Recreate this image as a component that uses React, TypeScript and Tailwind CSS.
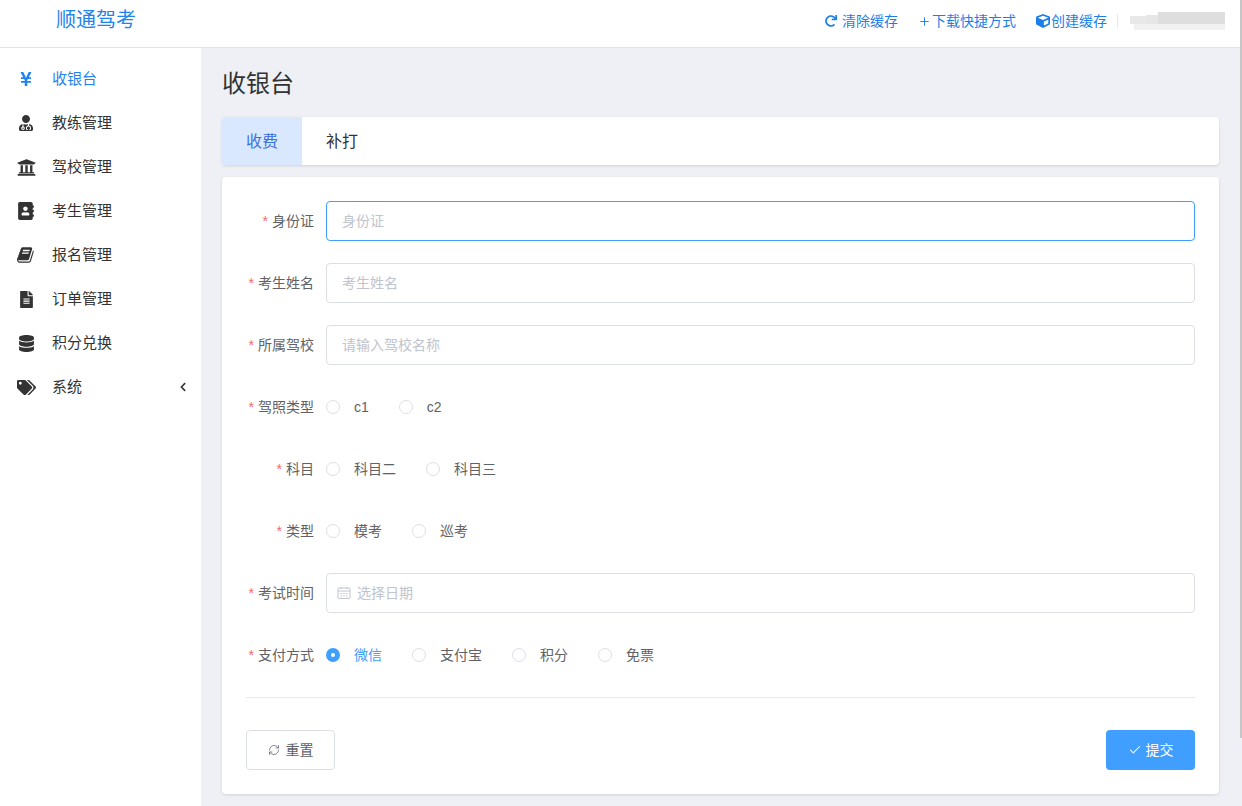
import React from 'react';
import { FaYenSign, FaUserMd, FaUniversity, FaAddressBook, FaFileAlt, FaDatabase, FaTags, FaRedo, FaCube, FaChevronLeft } from 'react-icons/fa';
import { Plus, RefreshCw, Check } from 'lucide-react';

const BookIcon = ({ size = 16, className }: { size?: number; className?: string }) => (
  <svg width={size} height={size} viewBox="0 0 1792 1792" fill="currentColor" className={className}>
    <path d="M1639 478q40 57 18 129l-275 906q-19 64-76.5 107.5t-122.5 43.5h-923q-77 0-148.5-53.5t-99.5-131.5q-24-67-2-127 0-4 3-27t4-37q1-8-3-21.5t-3-19.5q2-11 8-21t16.5-23.5 16.5-23.5q23-38 45-91.5t30-91.5q3-10 .5-30t-.5-28q3-11 17-28t17-23q21-36 42-92t25-90q1-9-2.5-32t.5-28q4-13 22-30.5t22-22.5q19-26 42.5-84.5t27.5-96.5q1-8-3-25.5t-2-26.5q2-8 9-18t18-23 17-21q8-12 16.5-30.5t15-35 16-36 19.5-32 26.5-23.5 36-11.5 47.5 5.5l-1 3q38-9 51-9h761q74 0 114 56t18 130l-274 906q-36 119-71.5 153.5t-128.5 34.5h-869q-27 0-38 15-11 16-1 43 24 70 144 70h923q29 0 56-15.5t35-41.5l300-987q7-22 5-57 38 15 59 43zm-1064 2q-4 13 2 22.5t20 9.5h608q13 0 25.5-9.5t16.5-22.5l21-64q4-13-2-22.5t-20-9.5h-608q-13 0-25.5 9.5t-16.5 22.5zm-83 256q-4 13 2 22.5t20 9.5h608q13 0 25.5-9.5t16.5-22.5l21-64q4-13-2-22.5t-20-9.5h-608q-13 0-25.5 9.5t-16.5 22.5z" />
  </svg>
);

const DateIcon = () => (
  <svg width="14" height="14" viewBox="0 0 14 14" fill="none" stroke="currentColor" className="mr-[6px] shrink-0">
    <rect x="1" y="2" width="12" height="10.5" rx="1" />
    <path d="M1 5h12M4 1v2M10 1v2" />
    <path d="M3.5 7.5h7M3.5 10h7" strokeDasharray="1.5 1.25" />
  </svg>
);

const menu = [
  { label: '收银台', icon: FaYenSign, size: 16, active: true },
  { label: '教练管理', icon: FaUserMd, size: 16 },
  { label: '驾校管理', icon: FaUniversity, size: 19 },
  { label: '考生管理', icon: FaAddressBook, size: 18 },
  { label: '报名管理', icon: BookIcon, size: 18 },
  { label: '订单管理', icon: FaFileAlt, size: 17 },
  { label: '积分兑换', icon: FaDatabase, size: 17 },
  { label: '系统', icon: FaTags, size: 19, arrow: true },
];

const Label = ({ text }: { text: string }) => (
  <label className="w-[68px] shrink-0 text-right text-[14px] text-[#606266] whitespace-nowrap">
    <span className="text-[#f56c6c] mr-1">*</span>
    {text}
  </label>
);

const Row = ({ label, children }: { label: string; children: React.ReactNode }) => (
  <div className="flex items-center h-10 gap-3">
    <Label text={label} />
    <div className="flex-1 flex items-center">{children}</div>
  </div>
);

const TextInput = ({ placeholder, focused }: { placeholder: string; focused?: boolean }) => (
  <input
    readOnly
    placeholder={placeholder}
    className={`w-full h-10 px-[15px] rounded border bg-white text-[14px] outline-none placeholder:text-[#c0c4cc] ${
      focused ? 'border-[#409eff]' : 'border-[#dcdfe6]'
    }`}
  />
);

const Radio = ({ label, checked }: { label: string; checked?: boolean }) => (
  <div className="flex items-center mr-[30px]">
    {checked ? (
      <span className="w-[14px] h-[14px] rounded-full bg-[#409eff] flex items-center justify-center">
        <span className="w-1 h-1 rounded-full bg-white" />
      </span>
    ) : (
      <span className="w-[14px] h-[14px] rounded-full border border-[#dcdfe6] bg-white" />
    )}
    <span className={`ml-[14px] text-[14px] ${checked ? 'text-[#409eff]' : 'text-[#606266]'}`}>{label}</span>
  </div>
);

export default function App() {
  return (
    <div className="relative h-[806px] overflow-hidden bg-[#eef0f5] font-['Liberation_Sans','Noto_Sans_CJK_SC',sans-serif]">
      {/* Header */}
      <header className="h-12 bg-white border-b border-[#e3e5ea] flex items-center pr-[17px]">
        <div className="pl-[56px] text-[20px] text-[#1f84ee] -mt-[7px]">顺通驾考</div>
        <div className="ml-auto flex items-center text-[14px] text-[#1a7fe8] -mt-[5px]">
          <span className="flex items-center mr-5">
            <FaRedo size={12} className="mr-[5px]" />
            清除缓存
          </span>
          <span className="flex items-center mr-5">
            <Plus size={13} strokeWidth={1.75} className="mr-[1px]" />
            下载快捷方式
          </span>
          <span className="flex items-center">
            <FaCube size={14} className="mr-[1px]" />
            创建缓存
          </span>
          <span className="ml-[10px] h-[14px] w-px bg-[#e8e8e8]" />
          {/* username is blurred out in the screenshot */}
          <div className="ml-[12px] w-[95px] flex flex-col blur-[0.5px]">
            <div className="h-3 flex items-end">
              <span className="h-2 w-4 bg-[#e8e8e8]" />
              <span className="h-[9px] w-3 bg-[#e6e6e6]" />
              <span className="h-3 flex-1 bg-[#dedede]" />
            </div>
            <div className="h-[6px] ml-1 bg-[#f1f1f1]" />
          </div>
        </div>
      </header>

      {/* page scrollbar */}
      <div className="absolute top-0 right-0 w-[2px] h-[738px] bg-[#c6c6c6]" />

      <div className="flex h-[758px]">
        {/* Sidebar */}
        <aside className="w-[201px] shrink-0 bg-white pt-[9px]">
          {menu.map((m) => (
            <div
              key={m.label}
              className={`flex items-center h-11 pr-[13px] text-[15px] ${m.active ? 'text-[#1f84ee]' : 'text-[#333333]'}`}
            >
              <span className="w-[52px] flex justify-center shrink-0">
                <m.icon size={m.size} className="shrink-0" />
              </span>
              <span>{m.label}</span>
              {m.arrow && <FaChevronLeft size={10} className="ml-auto text-[#333333]" />}
            </div>
          ))}
        </aside>

        {/* Main */}
        <main className="flex-1 pl-[21px] pr-[23px] min-w-0">
          <h1 className="text-[24px] leading-[32px] text-[#333333] mt-5 mb-[17px] font-normal">收银台</h1>

          <div className="h-12 bg-white rounded flex shadow-[0_1px_3px_rgba(0,0,0,0.12)] overflow-hidden">
            <div className="w-20 pt-px flex items-center justify-center bg-[#d9e8ff] text-[16px] text-[#3b6fe0]">收费</div>
            <div className="flex items-center pl-6 pt-px text-[16px] text-[#333333]">补打</div>
          </div>

          <section className="mt-3 bg-white rounded shadow-[0_1px_3px_rgba(0,0,0,0.12)] pt-6 px-6 pb-6 h-[617px]">
            <div className="flex flex-col gap-[22px]">
              <Row label="身份证">
                <TextInput placeholder="身份证" focused />
              </Row>
              <Row label="考生姓名">
                <TextInput placeholder="考生姓名" />
              </Row>
              <Row label="所属驾校">
                <TextInput placeholder="请输入驾校名称" />
              </Row>
              <Row label="驾照类型">
                <Radio label="c1" />
                <Radio label="c2" />
              </Row>
              <Row label="科目">
                <Radio label="科目二" />
                <Radio label="科目三" />
              </Row>
              <Row label="类型">
                <Radio label="模考" />
                <Radio label="巡考" />
              </Row>
              <Row label="考试时间">
                <div className="w-full h-10 rounded border border-[#dcdfe6] flex items-center pl-[10px] text-[14px] text-[#c0c4cc]">
                  <DateIcon />
                  选择日期
                </div>
              </Row>
              <Row label="支付方式">
                <Radio label="微信" checked />
                <Radio label="支付宝" />
                <Radio label="积分" />
                <Radio label="免票" />
              </Row>
            </div>

            <div className="mt-[22px] border-t border-[#e6e8eb]" />

            <div className="mt-8 flex justify-between">
              <button className="w-[89px] h-10 rounded border border-[#dcdfe6] bg-white text-[14px] text-[#606266] flex items-center justify-center">
                <RefreshCw size={12} strokeWidth={1.5} className="mr-[6px]" />
                重置
              </button>
              <button className="w-[89px] h-10 rounded bg-[#409eff] text-[14px] text-white flex items-center justify-center">
                <Check size={14} strokeWidth={1.75} className="mr-[4px]" />
                提交
              </button>
            </div>
          </section>
        </main>
      </div>
    </div>
  );
}
